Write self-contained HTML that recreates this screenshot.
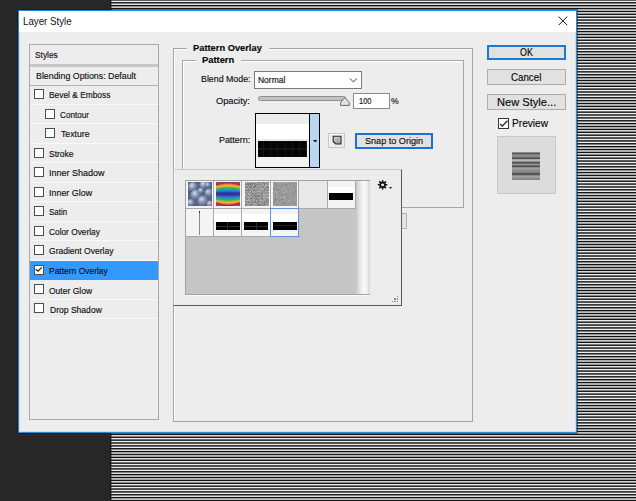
<!DOCTYPE html>
<html><head><meta charset="utf-8">
<style>
*{margin:0;padding:0;box-sizing:border-box}
html,body{width:636px;height:501px;overflow:hidden}
body{position:relative;background:#272727;font-family:"Liberation Sans",sans-serif;font-size:10px;color:#1b1b1b}
.stripes{position:absolute;left:111px;top:0;width:525px;height:501px;background:linear-gradient(180deg,#5e5e5e 0px 1px,#ececec 1px 2px,#282828 2px 3px,#797979 3px 4px,#e5e5e5 4px 5px,#141414 5px 6px,#909090 6px 7px,#cdcdcd 7px 8px,#141414 8px 9px,#acacac 9px 10px,#b2b2b2 10px 11px,#141414 11px 12px,#c7c7c7 12px 13px,#979797 13px 14px,#141414 14px 15px,#e2e2e2 15px 16px,#7c7c7c 16px 17px,#242424 17px 18px,#ececec 18px 19px,#616161 19px 20px,#3f3f3f 20px 21px,#ececec 21px 22px,#464646 22px 23px,#5a5a5a 23px 24px,#ececec 24px 25px,#2b2b2b 25px 26px,#757575 26px 27px,#ececec 27px 28px,#141414 28px 29px,#8d8d8d 29px 30px,#d1d1d1 30px 31px,#141414 31px 32px,#a8a8a8 32px 33px,#b6b6b6 33px 34px,#141414 34px 35px,#c3c3c3 35px 36px,#9b9b9b 36px 37px,#141414 37px 38px,#dedede 38px 39px,#808080 39px 40px,#212121 40px 41px,#ececec 41px 42px,#656565 42px 43px,#3c3c3c 43px 44px,#ececec 44px 45px,#4a4a4a 45px 46px,#575757 46px 47px,#ececec 47px 48px,#2f2f2f 48px 49px,#727272 49px 50px,#ececec 50px 51px,#171717 51px 52px,#8a8a8a 52px 53px,#d4d4d4 53px 54px,#141414 54px 55px,#a5a5a5 55px 56px,#b9b9b9 56px 57px,#141414 57px 58px,#c0c0c0 58px 59px,#9e9e9e 59px 60px,#141414 60px 61px,#dbdbdb 61px 62px,#838383 62px 63px,#1e1e1e 63px 64px,#ececec 64px 65px,#686868 65px 66px,#393939 66px 67px,#ececec 67px 68px,#4d4d4d 68px 69px,#545454 69px 70px,#ececec 70px 71px,#323232 71px 72px,#6f6f6f 72px 73px,#ececec 73px 74px,#1a1a1a 74px 75px,#868686 75px 76px,#d7d7d7 76px 77px,#141414 77px 78px,#a1a1a1 78px 79px,#bcbcbc 79px 80px,#141414 80px 81px,#bcbcbc 81px 82px,#a1a1a1 82px 83px,#141414 83px 84px,#d7d7d7 84px 85px,#868686 85px 86px,#1a1a1a 86px 87px,#ececec 87px 88px,#6b6b6b 88px 89px,#353535 89px 90px,#ececec 90px 91px,#505050 91px 92px,#505050 92px 93px,#ececec 93px 94px,#353535 94px 95px,#686868 95px 96px,#ececec 96px 97px,#1e1e1e 97px 98px,#838383 98px 99px,#dbdbdb 99px 100px,#141414 100px 101px,#9e9e9e 101px 102px,#c0c0c0 102px 103px,#141414 103px 104px,#b9b9b9 104px 105px,#a5a5a5 105px 106px,#141414 106px 107px,#d4d4d4 107px 108px,#8a8a8a 108px 109px,#171717 109px 110px,#ececec 110px 111px,#6f6f6f 111px 112px,#323232 112px 113px,#ececec 113px 114px,#545454 114px 115px,#4d4d4d 115px 116px,#ececec 116px 117px,#393939 117px 118px,#656565 118px 119px,#ececec 119px 120px,#212121 120px 121px,#808080 121px 122px,#dedede 122px 123px,#141414 123px 124px,#9b9b9b 124px 125px,#c3c3c3 125px 126px,#141414 126px 127px,#b6b6b6 127px 128px,#a8a8a8 128px 129px,#141414 129px 130px,#d1d1d1 130px 131px,#8d8d8d 131px 132px,#141414 132px 133px,#ececec 133px 134px,#727272 134px 135px,#2f2f2f 135px 136px,#ececec 136px 137px,#575757 137px 138px,#4a4a4a 138px 139px,#ececec 139px 140px,#3c3c3c 140px 141px,#616161 141px 142px,#ececec 142px 143px,#242424 143px 144px,#7c7c7c 144px 145px,#e2e2e2 145px 146px,#141414 146px 147px,#979797 147px 148px,#c7c7c7 148px 149px,#141414 149px 150px,#b2b2b2 150px 151px,#acacac 151px 152px,#141414 152px 153px,#cdcdcd 153px 154px,#909090 154px 155px,#141414 155px 156px,#e8e8e8 156px 157px,#757575 157px 158px,#2b2b2b 158px 159px,#ececec 159px 160px,#5a5a5a 160px 161px,#464646 161px 162px,#ececec 162px 163px,#434343 163px 164px,#5e5e5e 164px 165px,#ececec 165px 166px,#282828 166px 167px,#797979 167px 168px,#e5e5e5 168px 169px,#141414 169px 170px,#949494 170px 171px,#cacaca 171px 172px,#141414 172px 173px,#afafaf 173px 174px,#afafaf 174px 175px,#141414 175px 176px,#cacaca 176px 177px,#949494 177px 178px,#141414 178px 179px,#e5e5e5 179px 180px,#797979 180px 181px,#282828 181px 182px,#ececec 182px 183px,#5e5e5e 183px 184px,#434343 184px 185px,#ececec 185px 186px,#464646 186px 187px,#5a5a5a 187px 188px,#ececec 188px 189px,#2b2b2b 189px 190px,#757575 190px 191px,#e8e8e8 191px 192px,#141414 192px 193px,#909090 193px 194px,#cdcdcd 194px 195px,#141414 195px 196px,#acacac 196px 197px,#b2b2b2 197px 198px,#141414 198px 199px,#c7c7c7 199px 200px,#979797 200px 201px,#141414 201px 202px,#e2e2e2 202px 203px,#7c7c7c 203px 204px,#242424 204px 205px,#ececec 205px 206px,#616161 206px 207px,#3c3c3c 207px 208px,#ececec 208px 209px,#4a4a4a 209px 210px,#575757 210px 211px,#ececec 211px 212px,#2f2f2f 212px 213px,#727272 213px 214px,#ececec 214px 215px,#141414 215px 216px,#8d8d8d 216px 217px,#d1d1d1 217px 218px,#141414 218px 219px,#a8a8a8 219px 220px,#b6b6b6 220px 221px,#141414 221px 222px,#c3c3c3 222px 223px,#9b9b9b 223px 224px,#141414 224px 225px,#dedede 225px 226px,#808080 226px 227px,#212121 227px 228px,#ececec 228px 229px,#656565 229px 230px,#393939 230px 231px,#ececec 231px 232px,#4d4d4d 232px 233px,#545454 233px 234px,#ececec 234px 235px,#323232 235px 236px,#6f6f6f 236px 237px,#ececec 237px 238px,#171717 238px 239px,#8a8a8a 239px 240px,#d4d4d4 240px 241px,#141414 241px 242px,#a5a5a5 242px 243px,#b9b9b9 243px 244px,#141414 244px 245px,#c0c0c0 245px 246px,#9e9e9e 246px 247px,#141414 247px 248px,#dbdbdb 248px 249px,#838383 249px 250px,#1e1e1e 250px 251px,#ececec 251px 252px,#686868 252px 253px,#353535 253px 254px,#ececec 254px 255px,#505050 255px 256px,#505050 256px 257px,#ececec 257px 258px,#353535 258px 259px,#6b6b6b 259px 260px,#ececec 260px 261px,#1a1a1a 261px 262px,#868686 262px 263px,#d7d7d7 263px 264px,#141414 264px 265px,#a1a1a1 265px 266px,#bcbcbc 266px 267px,#141414 267px 268px,#bcbcbc 268px 269px,#a1a1a1 269px 270px,#141414 270px 271px,#d7d7d7 271px 272px,#868686 272px 273px,#1a1a1a 273px 274px,#ececec 274px 275px,#6f6f6f 275px 276px,#323232 276px 277px,#ececec 277px 278px,#545454 278px 279px,#4d4d4d 279px 280px,#ececec 280px 281px,#393939 281px 282px,#686868 282px 283px,#ececec 283px 284px,#1e1e1e 284px 285px,#838383 285px 286px,#dbdbdb 286px 287px,#141414 287px 288px,#9e9e9e 288px 289px,#c0c0c0 289px 290px,#141414 290px 291px,#b9b9b9 291px 292px,#a5a5a5 292px 293px,#141414 293px 294px,#d4d4d4 294px 295px,#8a8a8a 295px 296px,#171717 296px 297px,#ececec 297px 298px,#727272 298px 299px,#2f2f2f 299px 300px,#ececec 300px 301px,#575757 301px 302px,#4a4a4a 302px 303px,#ececec 303px 304px,#3c3c3c 304px 305px,#656565 305px 306px,#ececec 306px 307px,#212121 307px 308px,#808080 308px 309px,#dedede 309px 310px,#141414 310px 311px,#9b9b9b 311px 312px,#c3c3c3 312px 313px,#141414 313px 314px,#b6b6b6 314px 315px,#a8a8a8 315px 316px,#141414 316px 317px,#d1d1d1 317px 318px,#8d8d8d 318px 319px,#141414 319px 320px,#ececec 320px 321px,#757575 321px 322px,#2b2b2b 322px 323px,#ececec 323px 324px,#5a5a5a 324px 325px,#464646 325px 326px,#ececec 326px 327px,#3f3f3f 327px 328px,#616161 328px 329px,#ececec 329px 330px,#242424 330px 331px,#7c7c7c 331px 332px,#e2e2e2 332px 333px,#141414 333px 334px,#979797 334px 335px,#c7c7c7 335px 336px,#141414 336px 337px,#b2b2b2 337px 338px,#acacac 338px 339px,#141414 339px 340px,#cdcdcd 340px 341px,#909090 341px 342px,#141414 342px 343px,#e5e5e5 343px 344px,#797979 344px 345px,#282828 345px 346px,#ececec 346px 347px,#5e5e5e 347px 348px,#434343 348px 349px,#ececec 349px 350px,#434343 350px 351px,#5e5e5e 351px 352px,#ececec 352px 353px,#282828 353px 354px,#797979 354px 355px,#e5e5e5 355px 356px,#141414 356px 357px,#949494 357px 358px,#cacaca 358px 359px,#141414 359px 360px,#afafaf 360px 361px,#afafaf 361px 362px,#141414 362px 363px,#cacaca 363px 364px,#949494 364px 365px,#141414 365px 366px,#e2e2e2 366px 367px,#7c7c7c 367px 368px,#242424 368px 369px,#ececec 369px 370px,#616161 370px 371px,#3f3f3f 371px 372px,#ececec 372px 373px,#464646 373px 374px,#5a5a5a 374px 375px,#ececec 375px 376px,#2b2b2b 376px 377px,#757575 377px 378px,#e8e8e8 378px 379px,#141414 379px 380px,#909090 380px 381px,#cdcdcd 381px 382px,#141414 382px 383px,#acacac 383px 384px,#b2b2b2 384px 385px,#141414 385px 386px,#c7c7c7 386px 387px,#9b9b9b 387px 388px,#141414 388px 389px,#dedede 389px 390px,#808080 390px 391px,#212121 391px 392px,#ececec 392px 393px,#656565 393px 394px,#3c3c3c 394px 395px,#ececec 395px 396px,#4a4a4a 396px 397px,#575757 397px 398px,#ececec 398px 399px,#2f2f2f 399px 400px,#727272 400px 401px,#ececec 401px 402px,#141414 402px 403px,#8d8d8d 403px 404px,#d1d1d1 404px 405px,#141414 405px 406px,#a8a8a8 406px 407px,#b6b6b6 407px 408px,#141414 408px 409px,#c3c3c3 409px 410px,#9e9e9e 410px 411px,#141414 411px 412px,#dbdbdb 412px 413px,#838383 413px 414px,#1e1e1e 414px 415px,#ececec 415px 416px,#686868 416px 417px,#393939 417px 418px,#ececec 418px 419px,#4d4d4d 419px 420px,#545454 420px 421px,#ececec 421px 422px,#323232 422px 423px,#6f6f6f 423px 424px,#ececec 424px 425px,#171717 425px 426px,#8a8a8a 426px 427px,#d4d4d4 427px 428px,#141414 428px 429px,#a5a5a5 429px 430px,#b9b9b9 430px 431px,#141414 431px 432px,#c0c0c0 432px 433px,#a1a1a1 433px 434px,#141414 434px 435px,#d7d7d7 435px 436px,#868686 436px 437px,#1a1a1a 437px 438px,#ececec 438px 439px,#6b6b6b 439px 440px,#353535 440px 441px,#ececec 441px 442px,#505050 442px 443px,#505050 443px 444px,#ececec 444px 445px,#353535 445px 446px,#6b6b6b 446px 447px,#ececec 447px 448px,#1a1a1a 448px 449px,#868686 449px 450px,#d7d7d7 450px 451px,#141414 451px 452px,#a1a1a1 452px 453px,#bcbcbc 453px 454px,#141414 454px 455px,#b9b9b9 455px 456px,#a5a5a5 456px 457px,#141414 457px 458px,#d4d4d4 458px 459px,#8a8a8a 459px 460px,#171717 460px 461px,#ececec 461px 462px,#6f6f6f 462px 463px,#323232 463px 464px,#ececec 464px 465px,#545454 465px 466px,#4d4d4d 466px 467px,#ececec 467px 468px,#393939 468px 469px,#686868 469px 470px,#ececec 470px 471px,#1e1e1e 471px 472px,#838383 472px 473px,#dbdbdb 473px 474px,#141414 474px 475px,#9e9e9e 475px 476px,#c0c0c0 476px 477px,#141414 477px 478px,#b6b6b6 478px 479px,#a8a8a8 479px 480px,#141414 480px 481px,#d1d1d1 481px 482px,#8d8d8d 482px 483px,#141414 483px 484px,#ececec 484px 485px,#727272 485px 486px,#2f2f2f 486px 487px,#ececec 487px 488px,#575757 488px 489px,#4a4a4a 489px 490px,#ececec 490px 491px,#3c3c3c 491px 492px,#656565 492px 493px,#ececec 493px 494px,#212121 494px 495px,#808080 495px 496px,#dedede 496px 497px,#141414 497px 498px,#9b9b9b 498px 499px,#c3c3c3 499px 500px,#141414 500px 501px)}
.a{position:absolute}
.t{position:absolute;white-space:nowrap;transform-origin:0 0;-webkit-text-stroke:0.15px currentColor}
#dlg{position:absolute;left:18px;top:10px;width:559px;height:423px;border:1px solid #2b8ad6;background:#ededed;box-shadow:0 0 0 1px rgba(8,16,24,0.45),inset 1px 1px 0 rgba(160,210,250,0.5),inset -1px -1px 0 rgba(160,210,250,0.5)}
#title{position:absolute;left:19px;top:11px;width:557px;height:21px;background:#fff}
.lb{position:absolute;border:1px solid #a9a9a9;background:#ededed}
.row{position:absolute;left:30px;width:128px;height:19.49px;border-bottom:1px solid #f9f9f9}
.cb{position:absolute;width:10px;height:10px;border:1px solid #4d4d4d;background:#fff}
.gb{position:absolute;border:1px solid #a5a5a5;box-shadow:inset 1px 1px 0 #fff}
.btn{position:absolute;border:1px solid #adadad;background:#e1e1e1}
</style></head><body>
<div class="stripes"></div>
<div class="a" style="left:110px;top:0;width:1px;height:501px;background:#161616"></div>
<div class="a" style="left:111px;top:0;width:1px;height:501px;background:rgba(30,30,30,0.4)"></div>
<div id="dlg"></div>
<div id="title"></div>
<svg class="a" style="left:557.5px;top:16.3px" width="10" height="10" viewBox="0 0 10 10"><path d="M0.6 0.6L9.2 9.2M9.2 0.6L0.6 9.2" stroke="#1a1a1a" stroke-width="1"/></svg>

<!-- left list -->
<div class="lb" style="left:29px;top:44px;width:130px;height:376px"></div>
<div class="a" style="left:30px;top:45px;width:128px;height:19px;background:#ececec"></div>
<div class="a" style="left:30px;top:63.5px;width:128px;height:3px;background:#c6c6c6"></div>
<div class="a" style="left:30px;top:85px;width:128px;height:1px;background:#b4b4b4"></div>
<div class="row" style="top:85.50px;"><div class="cb" style="left:3.6px;top:3.6px"></div></div>
<div class="row" style="top:104.99px;"><div class="cb" style="left:15.3px;top:3.6px"></div></div>
<div class="row" style="top:124.48px;"><div class="cb" style="left:15.3px;top:3.6px"></div></div>
<div class="row" style="top:143.97px;"><div class="cb" style="left:3.6px;top:3.6px"></div></div>
<div class="row" style="top:163.46px;"><div class="cb" style="left:3.6px;top:3.6px"></div></div>
<div class="row" style="top:182.95px;"><div class="cb" style="left:3.6px;top:3.6px"></div></div>
<div class="row" style="top:202.44px;"><div class="cb" style="left:3.6px;top:3.6px"></div></div>
<div class="row" style="top:221.93px;"><div class="cb" style="left:3.6px;top:3.6px"></div></div>
<div class="row" style="top:241.42px;"><div class="cb" style="left:3.6px;top:3.6px"></div></div>
<div class="row" style="top:260.91px;background:#3399ff;border-bottom-color:#3399ff;"><div class="cb" style="left:3.6px;top:3.6px"><svg class="a" style="left:-1px;top:-1px" width="10" height="10" viewBox="0 0 10 10"><path d="M1.7 4.3L4 6.2L7.7 2.4" fill="none" stroke="#222" stroke-width="1.3"/></svg></div></div>
<div class="row" style="top:280.40px;"><div class="cb" style="left:3.6px;top:3.6px"></div></div>
<div class="row" style="top:299.89px;"><div class="cb" style="left:3.6px;top:3.6px"></div></div>

<!-- right group boxes -->
<div class="gb" style="left:173px;top:48px;width:300px;height:374px"></div>
<div class="a" style="left:187px;top:44px;width:82px;height:8px;background:#ededed"></div>
<div class="gb" style="left:182px;top:60px;width:282px;height:148px"></div>
<div class="a" style="left:195.6px;top:57px;width:45px;height:8px;background:#ededed"></div>

<div class="a" style="left:254px;top:70.5px;width:107.5px;height:18.5px;background:#fff;border:1px solid #7a7a7a"></div>
<svg class="a" style="left:349.3px;top:77px" width="10" height="7" viewBox="0 0 10 7"><path d="M1 1.5L4.4 4.9L7.8 1.5" fill="none" stroke="#3a3a3a" stroke-width="1"/></svg>

<div class="a" style="left:257.7px;top:96.3px;width:88px;height:4.6px;background:#c2c2c2;border:1px solid #8e8e8e;border-radius:2.3px"></div>
<svg class="a" style="left:336px;top:92px" width="18" height="16" viewBox="0 0 18 16"><path d="M4.5 13.4V10.8L8 6.3Q8.9 5.2 9.8 6.3L13.4 10.8V13.4Z" fill="#e2e2e2" stroke="#6c6c6c" stroke-width="1"/></svg>
<div class="a" style="left:352.5px;top:93px;width:37.5px;height:15.5px;background:#fff;border:1px solid #8a8a8a"></div>

<div class="a" style="left:255px;top:113px;width:65px;height:55px;background:#000"></div>
<div class="a" style="left:256px;top:114px;width:53px;height:53px;background:#ececec"></div>
<div class="a" style="left:256px;top:124.4px;width:53px;height:15px;background:#fff"></div>
<div class="a" style="left:256px;top:157px;width:53px;height:10px;background:#f2f2f2"></div>
<div class="a" style="left:258px;top:140.6px;width:49.2px;height:16.2px;background:#050505"></div>
<div class="a" style="left:258px;top:140.6px;width:49.2px;height:16.2px;background:linear-gradient(180deg,transparent 7.4px,#151515 7.4px,#151515 8.6px,transparent 8.6px),repeating-linear-gradient(90deg,transparent 0,transparent 4.8px,#161616 4.8px,#161616 6px,transparent 6px,transparent 7.25px)"></div>
<div class="a" style="left:310px;top:114px;width:9px;height:53px;background:#b9d7f5"></div>
<svg class="a" style="left:312.5px;top:140.2px" width="5" height="3" viewBox="0 0 5 3"><path d="M0 0H4.4L2.2 2.4Z" fill="#111"/></svg>

<div class="a" style="left:328px;top:133px;width:17px;height:15px;background:#ececec;border:1px solid #c6c6c6;box-shadow:inset 1px 1px 0 #fafafa"></div>
<svg class="a" style="left:331.5px;top:134.5px" width="10" height="10" viewBox="0 0 10 10"><defs><linearGradient id="ig" x1="0" y1="0" x2="1" y2="1"><stop offset="0" stop-color="#d8d8d8"/><stop offset="1" stop-color="#8a8a8a"/></linearGradient></defs><path d="M1.2 1.2H9V9H3.8L1.2 6.4Z" fill="url(#ig)" stroke="#2a2a2a" stroke-width="1.1"/><path d="M2.5 2.5H7.6V7.6" fill="none" stroke="#c4c4c4" stroke-width="0.9"/></svg>
<div class="a" style="left:355px;top:132.5px;width:77.7px;height:16px;background:#e1e1e1;border:2px solid #1d72d4"></div>

<!-- right buttons -->
<div class="btn" style="left:487px;top:44.5px;width:79px;height:15.5px;border:2px solid #1c78d2"></div>
<div class="btn" style="left:487px;top:69px;width:79px;height:15.5px"></div>
<div class="btn" style="left:487px;top:94px;width:79px;height:15.5px"></div>
<div class="cb" style="left:498px;top:118px;width:11px;height:11px;border-color:#333"></div><svg class="a" style="left:498px;top:117.5px" width="12" height="12" viewBox="0 0 12 12"><path d="M2.2 6L4.3 8L9.5 2.7" fill="none" stroke="#2a2a2a" stroke-width="1.35"/></svg>
<div class="a" style="left:497px;top:136px;width:58.5px;height:57.5px;background:#dcdcdc;border:1px solid #c8c8c8"></div>
<div class="a" style="left:512px;top:152px;width:27.5px;height:28px;background:linear-gradient(180deg,#8a8a8a 0px 1px,#5a5a5a 1px 2px,#7a7a7a 2px 3px,#8e8e8e 3px 4px,#888888 4px 5px,#6a6a6a 5px 6px,#4f4f4f 6px 7px,#aaaaaa 7px 8px,#b8b8b8 8px 9px,#8a8a8a 9px 10px,#5a5a5a 10px 11px,#666666 11px 12px,#999999 12px 13px,#6a6a6a 13px 14px,#505050 14px 15px,#8a8a8a 15px 16px,#a0a0a0 16px 17px,#999999 17px 18px,#888888 18px 19px,#909090 19px 20px,#777777 20px 21px,#5a5a5a 21px 22px,#555555 22px 23px,#8a8a8a 23px 24px,#a0a0a0 24px 25px,#999999 25px 26px,#8a8a8a 26px 27px,#888888 27px 28px)"></div>

<!-- popup -->
<div class="a" style="left:173px;top:169px;width:229px;height:137px;background:#ececec;border-left:1px solid #b0b0b0;border-top:1px solid #c9c9c9;border-right:1px solid #5a5a5a;border-bottom:1px solid #5a5a5a;box-shadow:inset 1px 0 0 #fafafa"></div>
<div class="a" style="left:184.7px;top:179.5px;width:185.5px;height:115px;background:#c5c5c5;border:1px solid #a3a3a3;box-shadow:0 1px 0 #fafafa"></div>
<div class="a" style="left:355.5px;top:180.5px;width:14px;height:113px;background:linear-gradient(90deg,#c8c8c8,#e8e8e8 30%,#f8f8f8 55%,#f4f4f4 75%,#d2d2d2)"></div>
<div class="a" style="left:185.70px;top:180.50px;width:27.37px;height:27.37px;background:#f4f4f4"></div>
<div class="a" style="left:214.07px;top:180.50px;width:27.37px;height:27.37px;background:#f4f4f4"></div>
<div class="a" style="left:242.44px;top:180.50px;width:27.37px;height:27.37px;background:#f4f4f4"></div>
<div class="a" style="left:270.81px;top:180.50px;width:27.37px;height:27.37px;background:#f4f4f4"></div>
<div class="a" style="left:299.18px;top:180.50px;width:27.37px;height:27.37px;background:#e8e8e8"></div>
<div class="a" style="left:327.55px;top:180.50px;width:27.37px;height:27.37px;background:#f4f4f4"></div>
<div class="a" style="left:185.70px;top:208.87px;width:27.37px;height:27.37px;background:#f4f4f4"></div>
<div class="a" style="left:214.07px;top:208.87px;width:27.37px;height:27.37px;background:#f4f4f4"></div>
<div class="a" style="left:242.44px;top:208.87px;width:27.37px;height:27.37px;background:#f4f4f4"></div>
<div class="a" style="left:270.81px;top:208.87px;width:27.37px;height:27.37px;background:#f4f4f4"></div>
<div class="a" style="left:213.07px;top:180.5px;width:1px;height:56.74px;background:#a8a8a8"></div>
<div class="a" style="left:241.44px;top:180.5px;width:1px;height:56.74px;background:#a8a8a8"></div>
<div class="a" style="left:269.81px;top:180.5px;width:1px;height:56.74px;background:#a8a8a8"></div>
<div class="a" style="left:298.18px;top:180.5px;width:1px;height:56.74px;background:#a8a8a8"></div>
<div class="a" style="left:326.55px;top:180.5px;width:1px;height:28.37px;background:#a8a8a8"></div>
<div class="a" style="left:354.92px;top:180.5px;width:1px;height:28.37px;background:#a8a8a8"></div>
<div class="a" style="left:185.7px;top:207.87px;width:170.22px;height:1px;background:#a8a8a8"></div>
<div class="a" style="left:185.7px;top:236.24px;width:113.98px;height:1px;background:#a8a8a8"></div>
<svg class="a" style="left:187.7px;top:182px" width="24" height="24" viewBox="0 0 24 24"><defs><radialGradient id="bg1" cx="0.38" cy="0.34" r="0.7"><stop offset="0" stop-color="#eef2f8"/><stop offset="0.12" stop-color="#b8c4d8"/><stop offset="0.45" stop-color="#8594b2"/><stop offset="1" stop-color="#4a5876"/></radialGradient></defs><rect width="24" height="24" fill="#56647f"/><circle cx="5" cy="5" r="5" fill="url(#bg1)"/><circle cx="16" cy="3" r="4.5" fill="url(#bg1)"/><circle cx="21" cy="11" r="4.5" fill="url(#bg1)"/><circle cx="8" cy="13" r="5.5" fill="url(#bg1)"/><circle cx="15" cy="19" r="5.5" fill="url(#bg1)"/><circle cx="3" cy="21" r="4" fill="url(#bg1)"/><circle cx="22" cy="22" r="3.5" fill="url(#bg1)"/><circle cx="13" cy="9" r="3.2" fill="url(#bg1)"/><circle cx="20" cy="3" r="3" fill="url(#bg1)"/></svg>
<svg class="a" style="left:216px;top:182px" width="24" height="24" viewBox="0 0 24 24" shape-rendering="crispEdges"><path d="M0 0h1v1h-1zM23 0h1v1h-1zM0 23h1v1h-1zM23 23h1v1h-1z" fill="#a36"/><path d="M1 0h1v1h-1zM4 0h1v1h-1zM19 0h1v1h-1zM22 0h1v1h-1zM1 23h1v1h-1zM4 23h1v1h-1zM19 23h1v1h-1zM22 23h1v1h-1z" fill="#a45"/><path d="M2 0h1v1h-1zM3 0h1v1h-1zM20 0h1v1h-1zM21 0h1v1h-1zM7 1h1v1h-1zM16 1h1v1h-1zM7 22h1v1h-1zM16 22h1v1h-1zM2 23h1v1h-1zM3 23h1v1h-1zM20 23h1v1h-1zM21 23h1v1h-1z" fill="#b44"/><path d="M5 0h1v1h-1zM18 0h1v1h-1zM5 1h1v1h-1zM18 1h1v1h-1zM1 2h1v1h-1zM22 2h1v1h-1zM1 21h1v1h-1zM22 21h1v1h-1zM5 22h1v1h-1zM18 22h1v1h-1zM5 23h1v1h-1zM18 23h1v1h-1z" fill="#936"/><path d="M6 0h1v1h-1zM17 0h1v1h-1zM2 1h1v1h-1zM21 1h1v1h-1zM2 22h1v1h-1zM21 22h1v1h-1zM6 23h1v1h-1zM17 23h1v1h-1z" fill="#836"/><path d="M7 0h1v1h-1zM8 0h1v1h-1zM9 0h1v1h-1zM10 0h1v1h-1zM11 0h1v1h-1zM12 0h1v1h-1zM13 0h1v1h-1zM14 0h1v1h-1zM15 0h1v1h-1zM16 0h1v1h-1zM3 1h1v1h-1zM4 1h1v1h-1zM19 1h1v1h-1zM20 1h1v1h-1zM0 2h1v1h-1zM23 2h1v1h-1zM0 21h1v1h-1zM23 21h1v1h-1zM3 22h1v1h-1zM4 22h1v1h-1zM19 22h1v1h-1zM20 22h1v1h-1zM7 23h1v1h-1zM8 23h1v1h-1zM9 23h1v1h-1zM10 23h1v1h-1zM11 23h1v1h-1zM12 23h1v1h-1zM13 23h1v1h-1zM14 23h1v1h-1zM15 23h1v1h-1zM16 23h1v1h-1z" fill="#837"/><path d="M0 1h1v1h-1zM23 1h1v1h-1zM0 22h1v1h-1zM23 22h1v1h-1z" fill="#b45"/><path d="M1 1h1v1h-1zM6 1h1v1h-1zM17 1h1v1h-1zM22 1h1v1h-1zM2 2h1v1h-1zM21 2h1v1h-1zM2 21h1v1h-1zM21 21h1v1h-1zM1 22h1v1h-1zM6 22h1v1h-1zM17 22h1v1h-1zM22 22h1v1h-1z" fill="#a35"/><path d="M8 1h1v1h-1zM9 1h1v1h-1zM14 1h1v1h-1zM15 1h1v1h-1zM3 2h1v1h-1zM20 2h1v1h-1zM3 21h1v1h-1zM20 21h1v1h-1zM8 22h1v1h-1zM9 22h1v1h-1zM14 22h1v1h-1zM15 22h1v1h-1z" fill="#c44"/><path d="M10 1h1v1h-1zM13 1h1v1h-1zM10 22h1v1h-1zM13 22h1v1h-1z" fill="#c43"/><path d="M11 1h1v1h-1zM12 1h1v1h-1zM4 2h1v1h-1zM19 2h1v1h-1zM0 3h1v1h-1zM23 3h1v1h-1zM0 20h1v1h-1zM23 20h1v1h-1zM4 21h1v1h-1zM19 21h1v1h-1zM11 22h1v1h-1zM12 22h1v1h-1z" fill="#d53"/><path d="M5 2h1v1h-1zM18 2h1v1h-1zM1 3h1v1h-1zM22 3h1v1h-1zM1 20h1v1h-1zM22 20h1v1h-1zM5 21h1v1h-1zM18 21h1v1h-1z" fill="#d63"/><path d="M6 2h1v1h-1zM17 2h1v1h-1zM6 21h1v1h-1zM17 21h1v1h-1z" fill="#e63"/><path d="M7 2h1v1h-1zM8 2h1v1h-1zM15 2h1v1h-1zM16 2h1v1h-1zM2 3h1v1h-1zM21 3h1v1h-1zM2 20h1v1h-1zM21 20h1v1h-1zM7 21h1v1h-1zM8 21h1v1h-1zM15 21h1v1h-1zM16 21h1v1h-1z" fill="#e73"/><path d="M9 2h1v1h-1zM10 2h1v1h-1zM11 2h1v1h-1zM12 2h1v1h-1zM13 2h1v1h-1zM14 2h1v1h-1zM3 3h1v1h-1zM20 3h1v1h-1zM3 20h1v1h-1zM20 20h1v1h-1zM9 21h1v1h-1zM10 21h1v1h-1zM11 21h1v1h-1zM12 21h1v1h-1zM13 21h1v1h-1zM14 21h1v1h-1z" fill="#e82"/><path d="M4 3h1v1h-1zM19 3h1v1h-1zM4 20h1v1h-1zM19 20h1v1h-1z" fill="#e92"/><path d="M5 3h1v1h-1zM18 3h1v1h-1zM0 4h1v1h-1zM23 4h1v1h-1zM0 19h1v1h-1zM23 19h1v1h-1zM5 20h1v1h-1zM18 20h1v1h-1z" fill="#e93"/><path d="M6 3h1v1h-1zM7 3h1v1h-1zM8 3h1v1h-1zM15 3h1v1h-1zM16 3h1v1h-1zM17 3h1v1h-1zM1 4h1v1h-1zM2 4h1v1h-1zM21 4h1v1h-1zM22 4h1v1h-1zM1 19h1v1h-1zM2 19h1v1h-1zM21 19h1v1h-1zM22 19h1v1h-1zM6 20h1v1h-1zM7 20h1v1h-1zM8 20h1v1h-1zM15 20h1v1h-1zM16 20h1v1h-1zM17 20h1v1h-1z" fill="#ea3"/><path d="M9 3h1v1h-1zM10 3h1v1h-1zM11 3h1v1h-1zM12 3h1v1h-1zM13 3h1v1h-1zM14 3h1v1h-1zM9 20h1v1h-1zM10 20h1v1h-1zM11 20h1v1h-1zM12 20h1v1h-1zM13 20h1v1h-1zM14 20h1v1h-1z" fill="#eb3"/><path d="M3 4h1v1h-1zM4 4h1v1h-1zM5 4h1v1h-1zM18 4h1v1h-1zM19 4h1v1h-1zM20 4h1v1h-1zM3 19h1v1h-1zM4 19h1v1h-1zM5 19h1v1h-1zM18 19h1v1h-1zM19 19h1v1h-1zM20 19h1v1h-1z" fill="#db3"/><path d="M6 4h1v1h-1zM17 4h1v1h-1zM0 5h1v1h-1zM23 5h1v1h-1zM0 18h1v1h-1zM23 18h1v1h-1zM6 19h1v1h-1zM17 19h1v1h-1z" fill="#cb3"/><path d="M7 4h1v1h-1zM8 4h1v1h-1zM15 4h1v1h-1zM16 4h1v1h-1zM1 5h1v1h-1zM22 5h1v1h-1zM1 18h1v1h-1zM22 18h1v1h-1zM7 19h1v1h-1zM8 19h1v1h-1zM15 19h1v1h-1zM16 19h1v1h-1z" fill="#bb3"/><path d="M9 4h1v1h-1zM10 4h1v1h-1zM11 4h1v1h-1zM12 4h1v1h-1zM13 4h1v1h-1zM14 4h1v1h-1zM2 5h1v1h-1zM21 5h1v1h-1zM2 18h1v1h-1zM21 18h1v1h-1zM9 19h1v1h-1zM10 19h1v1h-1zM11 19h1v1h-1zM12 19h1v1h-1zM13 19h1v1h-1zM14 19h1v1h-1z" fill="#ab3"/><path d="M3 5h1v1h-1zM20 5h1v1h-1zM3 18h1v1h-1zM20 18h1v1h-1z" fill="#9b4"/><path d="M4 5h1v1h-1zM19 5h1v1h-1zM4 18h1v1h-1zM19 18h1v1h-1z" fill="#8b4"/><path d="M5 5h1v1h-1zM6 5h1v1h-1zM17 5h1v1h-1zM18 5h1v1h-1zM5 18h1v1h-1zM6 18h1v1h-1zM17 18h1v1h-1zM18 18h1v1h-1z" fill="#7b4"/><path d="M7 5h1v1h-1zM8 5h1v1h-1zM15 5h1v1h-1zM16 5h1v1h-1zM0 6h1v1h-1zM23 6h1v1h-1zM0 17h1v1h-1zM23 17h1v1h-1zM7 18h1v1h-1zM8 18h1v1h-1zM15 18h1v1h-1zM16 18h1v1h-1z" fill="#6b4"/><path d="M9 5h1v1h-1zM10 5h1v1h-1zM11 5h1v1h-1zM12 5h1v1h-1zM13 5h1v1h-1zM14 5h1v1h-1zM1 6h1v1h-1zM22 6h1v1h-1zM1 17h1v1h-1zM22 17h1v1h-1zM9 18h1v1h-1zM10 18h1v1h-1zM11 18h1v1h-1zM12 18h1v1h-1zM13 18h1v1h-1zM14 18h1v1h-1z" fill="#5b4"/><path d="M2 6h1v1h-1zM3 6h1v1h-1zM4 6h1v1h-1zM19 6h1v1h-1zM20 6h1v1h-1zM21 6h1v1h-1zM2 17h1v1h-1zM3 17h1v1h-1zM4 17h1v1h-1zM19 17h1v1h-1zM20 17h1v1h-1zM21 17h1v1h-1z" fill="#4a5"/><path d="M5 6h1v1h-1zM6 6h1v1h-1zM17 6h1v1h-1zM18 6h1v1h-1zM5 17h1v1h-1zM6 17h1v1h-1zM17 17h1v1h-1zM18 17h1v1h-1z" fill="#3a6"/><path d="M7 6h1v1h-1zM8 6h1v1h-1zM9 6h1v1h-1zM10 6h1v1h-1zM11 6h1v1h-1zM12 6h1v1h-1zM13 6h1v1h-1zM14 6h1v1h-1zM15 6h1v1h-1zM16 6h1v1h-1zM0 7h1v1h-1zM23 7h1v1h-1zM0 16h1v1h-1zM23 16h1v1h-1zM7 17h1v1h-1zM8 17h1v1h-1zM9 17h1v1h-1zM10 17h1v1h-1zM11 17h1v1h-1zM12 17h1v1h-1zM13 17h1v1h-1zM14 17h1v1h-1zM15 17h1v1h-1zM16 17h1v1h-1z" fill="#3a7"/><path d="M1 7h1v1h-1zM22 7h1v1h-1zM1 16h1v1h-1zM22 16h1v1h-1z" fill="#3a8"/><path d="M2 7h1v1h-1zM3 7h1v1h-1zM20 7h1v1h-1zM21 7h1v1h-1zM2 16h1v1h-1zM3 16h1v1h-1zM20 16h1v1h-1zM21 16h1v1h-1z" fill="#3a9"/><path d="M4 7h1v1h-1zM19 7h1v1h-1zM4 16h1v1h-1zM19 16h1v1h-1z" fill="#39a"/><path d="M5 7h1v1h-1zM6 7h1v1h-1zM7 7h1v1h-1zM16 7h1v1h-1zM17 7h1v1h-1zM18 7h1v1h-1zM5 16h1v1h-1zM6 16h1v1h-1zM7 16h1v1h-1zM16 16h1v1h-1zM17 16h1v1h-1zM18 16h1v1h-1z" fill="#29a"/><path d="M8 7h1v1h-1zM9 7h1v1h-1zM10 7h1v1h-1zM11 7h1v1h-1zM12 7h1v1h-1zM13 7h1v1h-1zM14 7h1v1h-1zM15 7h1v1h-1zM0 8h1v1h-1zM1 8h1v1h-1zM22 8h1v1h-1zM23 8h1v1h-1zM0 15h1v1h-1zM1 15h1v1h-1zM22 15h1v1h-1zM23 15h1v1h-1zM8 16h1v1h-1zM9 16h1v1h-1zM10 16h1v1h-1zM11 16h1v1h-1zM12 16h1v1h-1zM13 16h1v1h-1zM14 16h1v1h-1zM15 16h1v1h-1z" fill="#29b"/><path d="M2 8h1v1h-1zM3 8h1v1h-1zM4 8h1v1h-1zM19 8h1v1h-1zM20 8h1v1h-1zM21 8h1v1h-1zM2 15h1v1h-1zM3 15h1v1h-1zM4 15h1v1h-1zM19 15h1v1h-1zM20 15h1v1h-1zM21 15h1v1h-1z" fill="#28b"/><path d="M5 8h1v1h-1zM6 8h1v1h-1zM7 8h1v1h-1zM8 8h1v1h-1zM9 8h1v1h-1zM10 8h1v1h-1zM11 8h1v1h-1zM12 8h1v1h-1zM13 8h1v1h-1zM14 8h1v1h-1zM15 8h1v1h-1zM16 8h1v1h-1zM17 8h1v1h-1zM18 8h1v1h-1zM5 15h1v1h-1zM6 15h1v1h-1zM7 15h1v1h-1zM8 15h1v1h-1zM9 15h1v1h-1zM10 15h1v1h-1zM11 15h1v1h-1zM12 15h1v1h-1zM13 15h1v1h-1zM14 15h1v1h-1zM15 15h1v1h-1zM16 15h1v1h-1zM17 15h1v1h-1zM18 15h1v1h-1z" fill="#28c"/><path d="M0 9h1v1h-1zM23 9h1v1h-1zM0 14h1v1h-1zM23 14h1v1h-1z" fill="#27c"/><path d="M1 9h1v1h-1zM2 9h1v1h-1zM3 9h1v1h-1zM20 9h1v1h-1zM21 9h1v1h-1zM22 9h1v1h-1zM1 14h1v1h-1zM2 14h1v1h-1zM3 14h1v1h-1zM20 14h1v1h-1zM21 14h1v1h-1zM22 14h1v1h-1z" fill="#37c"/><path d="M4 9h1v1h-1zM5 9h1v1h-1zM6 9h1v1h-1zM7 9h1v1h-1zM8 9h1v1h-1zM9 9h1v1h-1zM10 9h1v1h-1zM11 9h1v1h-1zM12 9h1v1h-1zM13 9h1v1h-1zM14 9h1v1h-1zM15 9h1v1h-1zM16 9h1v1h-1zM17 9h1v1h-1zM18 9h1v1h-1zM19 9h1v1h-1zM4 14h1v1h-1zM5 14h1v1h-1zM6 14h1v1h-1zM7 14h1v1h-1zM8 14h1v1h-1zM9 14h1v1h-1zM10 14h1v1h-1zM11 14h1v1h-1zM12 14h1v1h-1zM13 14h1v1h-1zM14 14h1v1h-1zM15 14h1v1h-1zM16 14h1v1h-1zM17 14h1v1h-1zM18 14h1v1h-1zM19 14h1v1h-1z" fill="#36c"/><path d="M0 10h1v1h-1zM23 10h1v1h-1zM0 13h1v1h-1zM23 13h1v1h-1z" fill="#34b"/><path d="M1 10h1v1h-1zM2 10h1v1h-1zM3 10h1v1h-1zM4 10h1v1h-1zM5 10h1v1h-1zM6 10h1v1h-1zM7 10h1v1h-1zM8 10h1v1h-1zM9 10h1v1h-1zM10 10h1v1h-1zM11 10h1v1h-1zM12 10h1v1h-1zM13 10h1v1h-1zM14 10h1v1h-1zM15 10h1v1h-1zM16 10h1v1h-1zM17 10h1v1h-1zM18 10h1v1h-1zM19 10h1v1h-1zM20 10h1v1h-1zM21 10h1v1h-1zM22 10h1v1h-1zM1 13h1v1h-1zM2 13h1v1h-1zM3 13h1v1h-1zM4 13h1v1h-1zM5 13h1v1h-1zM6 13h1v1h-1zM7 13h1v1h-1zM8 13h1v1h-1zM9 13h1v1h-1zM10 13h1v1h-1zM11 13h1v1h-1zM12 13h1v1h-1zM13 13h1v1h-1zM14 13h1v1h-1zM15 13h1v1h-1zM16 13h1v1h-1zM17 13h1v1h-1zM18 13h1v1h-1zM19 13h1v1h-1zM20 13h1v1h-1zM21 13h1v1h-1zM22 13h1v1h-1z" fill="#34a"/><path d="M0 11h1v1h-1zM1 11h1v1h-1zM2 11h1v1h-1zM3 11h1v1h-1zM4 11h1v1h-1zM19 11h1v1h-1zM20 11h1v1h-1zM21 11h1v1h-1zM22 11h1v1h-1zM23 11h1v1h-1zM0 12h1v1h-1zM1 12h1v1h-1zM2 12h1v1h-1zM3 12h1v1h-1zM4 12h1v1h-1zM19 12h1v1h-1zM20 12h1v1h-1zM21 12h1v1h-1zM22 12h1v1h-1zM23 12h1v1h-1z" fill="#339"/><path d="M5 11h1v1h-1zM6 11h1v1h-1zM7 11h1v1h-1zM8 11h1v1h-1zM9 11h1v1h-1zM10 11h1v1h-1zM11 11h1v1h-1zM12 11h1v1h-1zM13 11h1v1h-1zM14 11h1v1h-1zM15 11h1v1h-1zM16 11h1v1h-1zM17 11h1v1h-1zM18 11h1v1h-1zM5 12h1v1h-1zM6 12h1v1h-1zM7 12h1v1h-1zM8 12h1v1h-1zM9 12h1v1h-1zM10 12h1v1h-1zM11 12h1v1h-1zM12 12h1v1h-1zM13 12h1v1h-1zM14 12h1v1h-1zM15 12h1v1h-1zM16 12h1v1h-1zM17 12h1v1h-1zM18 12h1v1h-1z" fill="#338"/></svg>
<svg class="a" style="left:244.6px;top:182.3px" width="24" height="24" viewBox="0 0 24 24" shape-rendering="crispEdges"><path d="M7 1h1v1h-1zM10 1h1v1h-1zM3 2h1v1h-1zM5 2h1v1h-1zM19 2h1v1h-1zM10 3h1v1h-1zM9 5h1v1h-1zM20 7h1v1h-1zM13 13h1v1h-1zM11 16h1v1h-1zM17 16h1v1h-1zM14 22h1v1h-1zM0 23h1v1h-1zM13 23h1v1h-1z" fill="#666"/><path d="M5 1h1v1h-1zM8 1h1v1h-1zM0 2h1v1h-1zM1 2h1v1h-1zM9 2h1v1h-1zM15 2h1v1h-1zM2 4h1v1h-1zM6 4h1v1h-1zM10 4h1v1h-1zM18 4h1v1h-1zM5 5h1v1h-1zM8 5h1v1h-1zM22 5h1v1h-1zM3 7h1v1h-1zM19 7h1v1h-1zM1 8h1v1h-1zM0 9h1v1h-1zM7 11h1v1h-1zM10 11h1v1h-1zM12 11h1v1h-1zM16 11h1v1h-1zM20 11h1v1h-1zM3 13h1v1h-1zM9 13h1v1h-1zM16 13h1v1h-1zM11 14h1v1h-1zM14 14h1v1h-1zM22 14h1v1h-1zM7 15h1v1h-1zM0 16h1v1h-1zM2 16h1v1h-1zM5 16h1v1h-1zM6 16h1v1h-1zM16 16h1v1h-1zM1 17h1v1h-1zM12 17h1v1h-1zM3 19h1v1h-1zM21 19h1v1h-1zM10 20h1v1h-1zM12 20h1v1h-1zM19 20h1v1h-1zM22 20h1v1h-1zM13 21h1v1h-1zM19 21h1v1h-1zM0 22h1v1h-1zM6 22h1v1h-1zM19 22h1v1h-1zM17 23h1v1h-1z" fill="#777"/><path d="M2 0h1v1h-1zM13 0h1v1h-1zM16 0h1v1h-1zM17 0h1v1h-1zM18 0h1v1h-1zM23 0h1v1h-1zM3 1h1v1h-1zM4 1h1v1h-1zM6 1h1v1h-1zM13 1h1v1h-1zM17 1h1v1h-1zM18 1h1v1h-1zM19 1h1v1h-1zM20 1h1v1h-1zM22 1h1v1h-1zM2 2h1v1h-1zM6 2h1v1h-1zM7 2h1v1h-1zM11 2h1v1h-1zM12 2h1v1h-1zM13 2h1v1h-1zM22 2h1v1h-1zM9 3h1v1h-1zM22 3h1v1h-1zM1 4h1v1h-1zM4 4h1v1h-1zM5 4h1v1h-1zM7 4h1v1h-1zM9 4h1v1h-1zM15 4h1v1h-1zM16 4h1v1h-1zM22 4h1v1h-1zM23 4h1v1h-1zM0 5h1v1h-1zM1 5h1v1h-1zM2 5h1v1h-1zM3 5h1v1h-1zM4 5h1v1h-1zM12 5h1v1h-1zM13 5h1v1h-1zM14 5h1v1h-1zM16 5h1v1h-1zM18 5h1v1h-1zM21 5h1v1h-1zM23 5h1v1h-1zM11 6h1v1h-1zM23 6h1v1h-1zM5 7h1v1h-1zM9 7h1v1h-1zM10 7h1v1h-1zM12 7h1v1h-1zM15 7h1v1h-1zM23 7h1v1h-1zM2 8h1v1h-1zM3 8h1v1h-1zM4 8h1v1h-1zM8 8h1v1h-1zM9 8h1v1h-1zM11 8h1v1h-1zM13 8h1v1h-1zM15 8h1v1h-1zM17 8h1v1h-1zM22 8h1v1h-1zM23 8h1v1h-1zM6 9h1v1h-1zM10 9h1v1h-1zM18 9h1v1h-1zM19 9h1v1h-1zM0 10h1v1h-1zM9 10h1v1h-1zM12 10h1v1h-1zM14 10h1v1h-1zM16 10h1v1h-1zM17 10h1v1h-1zM22 10h1v1h-1zM23 10h1v1h-1zM2 11h1v1h-1zM5 11h1v1h-1zM8 11h1v1h-1zM14 11h1v1h-1zM17 11h1v1h-1zM23 11h1v1h-1zM1 12h1v1h-1zM6 12h1v1h-1zM7 12h1v1h-1zM9 12h1v1h-1zM11 12h1v1h-1zM2 13h1v1h-1zM5 13h1v1h-1zM7 13h1v1h-1zM10 13h1v1h-1zM11 13h1v1h-1zM17 13h1v1h-1zM23 13h1v1h-1zM0 14h1v1h-1zM2 14h1v1h-1zM7 14h1v1h-1zM9 14h1v1h-1zM10 14h1v1h-1zM12 14h1v1h-1zM13 14h1v1h-1zM17 14h1v1h-1zM21 14h1v1h-1zM10 15h1v1h-1zM16 15h1v1h-1zM9 16h1v1h-1zM10 16h1v1h-1zM12 16h1v1h-1zM19 16h1v1h-1zM4 17h1v1h-1zM7 17h1v1h-1zM10 17h1v1h-1zM13 17h1v1h-1zM16 17h1v1h-1zM21 17h1v1h-1zM22 17h1v1h-1zM23 17h1v1h-1zM9 18h1v1h-1zM12 18h1v1h-1zM13 18h1v1h-1zM20 18h1v1h-1zM23 18h1v1h-1zM0 19h1v1h-1zM1 19h1v1h-1zM2 19h1v1h-1zM6 19h1v1h-1zM7 19h1v1h-1zM9 19h1v1h-1zM10 19h1v1h-1zM12 19h1v1h-1zM13 19h1v1h-1zM14 19h1v1h-1zM15 19h1v1h-1zM16 19h1v1h-1zM23 19h1v1h-1zM0 20h1v1h-1zM3 20h1v1h-1zM4 20h1v1h-1zM7 20h1v1h-1zM8 20h1v1h-1zM11 20h1v1h-1zM1 21h1v1h-1zM6 21h1v1h-1zM16 21h1v1h-1zM18 21h1v1h-1zM1 22h1v1h-1zM4 22h1v1h-1zM5 22h1v1h-1zM7 22h1v1h-1zM12 22h1v1h-1zM13 22h1v1h-1zM15 22h1v1h-1zM17 22h1v1h-1zM1 23h1v1h-1zM2 23h1v1h-1zM4 23h1v1h-1zM5 23h1v1h-1zM7 23h1v1h-1zM9 23h1v1h-1zM11 23h1v1h-1zM15 23h1v1h-1z" fill="#888"/><path d="M4 0h1v1h-1zM5 0h1v1h-1zM8 0h1v1h-1zM11 0h1v1h-1zM14 0h1v1h-1zM15 0h1v1h-1zM19 0h1v1h-1zM20 0h1v1h-1zM21 0h1v1h-1zM22 0h1v1h-1zM0 1h1v1h-1zM1 1h1v1h-1zM2 1h1v1h-1zM11 1h1v1h-1zM12 1h1v1h-1zM14 1h1v1h-1zM15 1h1v1h-1zM21 1h1v1h-1zM14 2h1v1h-1zM16 2h1v1h-1zM17 2h1v1h-1zM23 2h1v1h-1zM0 3h1v1h-1zM3 3h1v1h-1zM4 3h1v1h-1zM5 3h1v1h-1zM6 3h1v1h-1zM7 3h1v1h-1zM11 3h1v1h-1zM12 3h1v1h-1zM14 3h1v1h-1zM15 3h1v1h-1zM18 3h1v1h-1zM19 3h1v1h-1zM0 4h1v1h-1zM3 4h1v1h-1zM11 4h1v1h-1zM12 4h1v1h-1zM13 4h1v1h-1zM17 4h1v1h-1zM19 4h1v1h-1zM21 4h1v1h-1zM6 5h1v1h-1zM7 5h1v1h-1zM10 5h1v1h-1zM15 5h1v1h-1zM20 5h1v1h-1zM0 6h1v1h-1zM3 6h1v1h-1zM6 6h1v1h-1zM7 6h1v1h-1zM8 6h1v1h-1zM13 6h1v1h-1zM14 6h1v1h-1zM17 6h1v1h-1zM18 6h1v1h-1zM20 6h1v1h-1zM21 6h1v1h-1zM0 7h1v1h-1zM1 7h1v1h-1zM2 7h1v1h-1zM4 7h1v1h-1zM6 7h1v1h-1zM7 7h1v1h-1zM8 7h1v1h-1zM11 7h1v1h-1zM13 7h1v1h-1zM14 7h1v1h-1zM17 7h1v1h-1zM22 7h1v1h-1zM0 8h1v1h-1zM5 8h1v1h-1zM6 8h1v1h-1zM7 8h1v1h-1zM10 8h1v1h-1zM19 8h1v1h-1zM20 8h1v1h-1zM21 8h1v1h-1zM2 9h1v1h-1zM3 9h1v1h-1zM4 9h1v1h-1zM8 9h1v1h-1zM11 9h1v1h-1zM15 9h1v1h-1zM16 9h1v1h-1zM17 9h1v1h-1zM22 9h1v1h-1zM1 10h1v1h-1zM2 10h1v1h-1zM3 10h1v1h-1zM4 10h1v1h-1zM5 10h1v1h-1zM6 10h1v1h-1zM7 10h1v1h-1zM11 10h1v1h-1zM13 10h1v1h-1zM18 10h1v1h-1zM19 10h1v1h-1zM20 10h1v1h-1zM21 10h1v1h-1zM0 11h1v1h-1zM1 11h1v1h-1zM4 11h1v1h-1zM6 11h1v1h-1zM9 11h1v1h-1zM11 11h1v1h-1zM13 11h1v1h-1zM15 11h1v1h-1zM19 11h1v1h-1zM22 11h1v1h-1zM2 12h1v1h-1zM10 12h1v1h-1zM15 12h1v1h-1zM16 12h1v1h-1zM17 12h1v1h-1zM21 12h1v1h-1zM6 13h1v1h-1zM8 13h1v1h-1zM12 13h1v1h-1zM14 13h1v1h-1zM15 13h1v1h-1zM18 13h1v1h-1zM19 13h1v1h-1zM20 13h1v1h-1zM22 13h1v1h-1zM1 14h1v1h-1zM3 14h1v1h-1zM5 14h1v1h-1zM8 14h1v1h-1zM15 14h1v1h-1zM16 14h1v1h-1zM23 14h1v1h-1zM4 15h1v1h-1zM6 15h1v1h-1zM8 15h1v1h-1zM12 15h1v1h-1zM13 15h1v1h-1zM14 15h1v1h-1zM20 15h1v1h-1zM1 16h1v1h-1zM3 16h1v1h-1zM4 16h1v1h-1zM7 16h1v1h-1zM8 16h1v1h-1zM13 16h1v1h-1zM14 16h1v1h-1zM18 16h1v1h-1zM20 16h1v1h-1zM21 16h1v1h-1zM22 16h1v1h-1zM2 17h1v1h-1zM6 17h1v1h-1zM11 17h1v1h-1zM14 17h1v1h-1zM15 17h1v1h-1zM17 17h1v1h-1zM18 17h1v1h-1zM0 18h1v1h-1zM5 18h1v1h-1zM7 18h1v1h-1zM10 18h1v1h-1zM14 18h1v1h-1zM17 18h1v1h-1zM18 18h1v1h-1zM19 18h1v1h-1zM21 18h1v1h-1zM22 18h1v1h-1zM4 19h1v1h-1zM8 19h1v1h-1zM17 19h1v1h-1zM19 19h1v1h-1zM20 19h1v1h-1zM22 19h1v1h-1zM2 20h1v1h-1zM5 20h1v1h-1zM6 20h1v1h-1zM9 20h1v1h-1zM14 20h1v1h-1zM15 20h1v1h-1zM16 20h1v1h-1zM17 20h1v1h-1zM18 20h1v1h-1zM20 20h1v1h-1zM21 20h1v1h-1zM23 20h1v1h-1zM2 21h1v1h-1zM3 21h1v1h-1zM4 21h1v1h-1zM7 21h1v1h-1zM10 21h1v1h-1zM11 21h1v1h-1zM15 21h1v1h-1zM17 21h1v1h-1zM20 21h1v1h-1zM21 21h1v1h-1zM23 21h1v1h-1zM3 22h1v1h-1zM8 22h1v1h-1zM11 22h1v1h-1zM16 22h1v1h-1zM18 22h1v1h-1zM20 22h1v1h-1zM21 22h1v1h-1zM22 22h1v1h-1zM23 22h1v1h-1zM6 23h1v1h-1zM10 23h1v1h-1zM12 23h1v1h-1zM14 23h1v1h-1zM16 23h1v1h-1zM18 23h1v1h-1zM19 23h1v1h-1zM20 23h1v1h-1zM21 23h1v1h-1zM22 23h1v1h-1z" fill="#999"/><path d="M0 0h1v1h-1zM3 0h1v1h-1zM7 0h1v1h-1zM9 0h1v1h-1zM12 0h1v1h-1zM9 1h1v1h-1zM16 1h1v1h-1zM23 1h1v1h-1zM4 2h1v1h-1zM8 2h1v1h-1zM10 2h1v1h-1zM18 2h1v1h-1zM20 2h1v1h-1zM21 2h1v1h-1zM2 3h1v1h-1zM13 3h1v1h-1zM16 3h1v1h-1zM17 3h1v1h-1zM21 3h1v1h-1zM8 4h1v1h-1zM14 4h1v1h-1zM20 4h1v1h-1zM11 5h1v1h-1zM17 5h1v1h-1zM19 5h1v1h-1zM1 6h1v1h-1zM2 6h1v1h-1zM4 6h1v1h-1zM5 6h1v1h-1zM9 6h1v1h-1zM10 6h1v1h-1zM12 6h1v1h-1zM16 6h1v1h-1zM19 6h1v1h-1zM22 6h1v1h-1zM21 7h1v1h-1zM12 8h1v1h-1zM14 8h1v1h-1zM16 8h1v1h-1zM18 8h1v1h-1zM7 9h1v1h-1zM9 9h1v1h-1zM12 9h1v1h-1zM20 9h1v1h-1zM21 9h1v1h-1zM10 10h1v1h-1zM15 10h1v1h-1zM3 11h1v1h-1zM18 11h1v1h-1zM21 11h1v1h-1zM8 12h1v1h-1zM12 12h1v1h-1zM13 12h1v1h-1zM14 12h1v1h-1zM18 12h1v1h-1zM19 12h1v1h-1zM20 12h1v1h-1zM23 12h1v1h-1zM0 13h1v1h-1zM1 13h1v1h-1zM4 13h1v1h-1zM21 13h1v1h-1zM4 14h1v1h-1zM6 14h1v1h-1zM18 14h1v1h-1zM19 14h1v1h-1zM20 14h1v1h-1zM0 15h1v1h-1zM1 15h1v1h-1zM2 15h1v1h-1zM5 15h1v1h-1zM11 15h1v1h-1zM15 15h1v1h-1zM17 15h1v1h-1zM18 15h1v1h-1zM19 15h1v1h-1zM15 16h1v1h-1zM23 16h1v1h-1zM0 17h1v1h-1zM5 17h1v1h-1zM8 17h1v1h-1zM9 17h1v1h-1zM19 17h1v1h-1zM20 17h1v1h-1zM4 18h1v1h-1zM6 18h1v1h-1zM8 18h1v1h-1zM5 19h1v1h-1zM11 19h1v1h-1zM18 19h1v1h-1zM1 20h1v1h-1zM13 20h1v1h-1zM0 21h1v1h-1zM5 21h1v1h-1zM8 21h1v1h-1zM9 21h1v1h-1zM12 21h1v1h-1zM14 21h1v1h-1zM22 21h1v1h-1zM2 22h1v1h-1zM9 22h1v1h-1zM10 22h1v1h-1zM3 23h1v1h-1zM8 23h1v1h-1zM23 23h1v1h-1z" fill="#aaa"/><path d="M1 0h1v1h-1zM6 0h1v1h-1zM10 0h1v1h-1zM1 3h1v1h-1zM8 3h1v1h-1zM20 3h1v1h-1zM15 6h1v1h-1zM16 7h1v1h-1zM18 7h1v1h-1zM1 9h1v1h-1zM5 9h1v1h-1zM13 9h1v1h-1zM14 9h1v1h-1zM23 9h1v1h-1zM8 10h1v1h-1zM0 12h1v1h-1zM3 12h1v1h-1zM4 12h1v1h-1zM5 12h1v1h-1zM22 12h1v1h-1zM3 15h1v1h-1zM9 15h1v1h-1zM21 15h1v1h-1zM22 15h1v1h-1zM3 17h1v1h-1zM1 18h1v1h-1zM2 18h1v1h-1zM3 18h1v1h-1zM11 18h1v1h-1zM15 18h1v1h-1zM16 18h1v1h-1z" fill="#bbb"/><path d="M23 3h1v1h-1zM23 15h1v1h-1z" fill="#ccc"/></svg>
<svg class="a" style="left:272.9px;top:182.3px" width="24" height="24" viewBox="0 0 24 24" shape-rendering="crispEdges"><path d="M1 18h1v1h-1zM11 22h1v1h-1z" fill="#777"/><path d="M1 0h1v1h-1zM2 0h1v1h-1zM3 2h1v1h-1zM9 2h1v1h-1zM12 2h1v1h-1zM13 2h1v1h-1zM3 3h1v1h-1zM19 3h1v1h-1zM21 3h1v1h-1zM3 4h1v1h-1zM7 4h1v1h-1zM14 4h1v1h-1zM20 4h1v1h-1zM21 4h1v1h-1zM22 5h1v1h-1zM0 6h1v1h-1zM1 6h1v1h-1zM16 6h1v1h-1zM19 6h1v1h-1zM1 7h1v1h-1zM4 7h1v1h-1zM15 7h1v1h-1zM3 8h1v1h-1zM4 8h1v1h-1zM5 8h1v1h-1zM22 8h1v1h-1zM15 9h1v1h-1zM22 9h1v1h-1zM0 10h1v1h-1zM5 10h1v1h-1zM17 10h1v1h-1zM13 11h1v1h-1zM19 11h1v1h-1zM20 11h1v1h-1zM2 12h1v1h-1zM3 12h1v1h-1zM6 12h1v1h-1zM7 12h1v1h-1zM9 12h1v1h-1zM14 12h1v1h-1zM15 12h1v1h-1zM2 13h1v1h-1zM5 13h1v1h-1zM8 13h1v1h-1zM13 13h1v1h-1zM19 13h1v1h-1zM0 14h1v1h-1zM16 14h1v1h-1zM19 14h1v1h-1zM13 15h1v1h-1zM2 16h1v1h-1zM8 16h1v1h-1zM13 16h1v1h-1zM16 16h1v1h-1zM18 16h1v1h-1zM1 17h1v1h-1zM2 17h1v1h-1zM4 17h1v1h-1zM8 17h1v1h-1zM9 17h1v1h-1zM3 18h1v1h-1zM19 18h1v1h-1zM0 19h1v1h-1zM6 19h1v1h-1zM8 19h1v1h-1zM12 19h1v1h-1zM17 19h1v1h-1zM20 19h1v1h-1zM0 20h1v1h-1zM2 20h1v1h-1zM10 20h1v1h-1zM11 20h1v1h-1zM22 20h1v1h-1zM0 21h1v1h-1zM3 21h1v1h-1zM10 21h1v1h-1zM15 21h1v1h-1zM0 22h1v1h-1zM3 22h1v1h-1zM17 22h1v1h-1zM20 22h1v1h-1zM4 23h1v1h-1zM8 23h1v1h-1zM23 23h1v1h-1z" fill="#888"/><path d="M0 0h1v1h-1zM3 0h1v1h-1zM4 0h1v1h-1zM6 0h1v1h-1zM7 0h1v1h-1zM10 0h1v1h-1zM11 0h1v1h-1zM12 0h1v1h-1zM14 0h1v1h-1zM15 0h1v1h-1zM16 0h1v1h-1zM17 0h1v1h-1zM18 0h1v1h-1zM19 0h1v1h-1zM20 0h1v1h-1zM21 0h1v1h-1zM22 0h1v1h-1zM23 0h1v1h-1zM0 1h1v1h-1zM1 1h1v1h-1zM2 1h1v1h-1zM3 1h1v1h-1zM4 1h1v1h-1zM6 1h1v1h-1zM7 1h1v1h-1zM8 1h1v1h-1zM9 1h1v1h-1zM10 1h1v1h-1zM11 1h1v1h-1zM12 1h1v1h-1zM13 1h1v1h-1zM15 1h1v1h-1zM16 1h1v1h-1zM17 1h1v1h-1zM18 1h1v1h-1zM19 1h1v1h-1zM20 1h1v1h-1zM21 1h1v1h-1zM22 1h1v1h-1zM23 1h1v1h-1zM0 2h1v1h-1zM1 2h1v1h-1zM2 2h1v1h-1zM4 2h1v1h-1zM5 2h1v1h-1zM6 2h1v1h-1zM7 2h1v1h-1zM8 2h1v1h-1zM10 2h1v1h-1zM11 2h1v1h-1zM14 2h1v1h-1zM15 2h1v1h-1zM16 2h1v1h-1zM17 2h1v1h-1zM18 2h1v1h-1zM19 2h1v1h-1zM21 2h1v1h-1zM22 2h1v1h-1zM23 2h1v1h-1zM1 3h1v1h-1zM2 3h1v1h-1zM4 3h1v1h-1zM5 3h1v1h-1zM6 3h1v1h-1zM8 3h1v1h-1zM9 3h1v1h-1zM10 3h1v1h-1zM12 3h1v1h-1zM13 3h1v1h-1zM14 3h1v1h-1zM16 3h1v1h-1zM17 3h1v1h-1zM18 3h1v1h-1zM20 3h1v1h-1zM23 3h1v1h-1zM0 4h1v1h-1zM1 4h1v1h-1zM2 4h1v1h-1zM4 4h1v1h-1zM5 4h1v1h-1zM6 4h1v1h-1zM8 4h1v1h-1zM9 4h1v1h-1zM10 4h1v1h-1zM11 4h1v1h-1zM12 4h1v1h-1zM13 4h1v1h-1zM15 4h1v1h-1zM16 4h1v1h-1zM17 4h1v1h-1zM18 4h1v1h-1zM22 4h1v1h-1zM23 4h1v1h-1zM1 5h1v1h-1zM2 5h1v1h-1zM3 5h1v1h-1zM5 5h1v1h-1zM6 5h1v1h-1zM7 5h1v1h-1zM8 5h1v1h-1zM9 5h1v1h-1zM11 5h1v1h-1zM12 5h1v1h-1zM13 5h1v1h-1zM14 5h1v1h-1zM16 5h1v1h-1zM17 5h1v1h-1zM18 5h1v1h-1zM20 5h1v1h-1zM2 6h1v1h-1zM3 6h1v1h-1zM4 6h1v1h-1zM5 6h1v1h-1zM6 6h1v1h-1zM7 6h1v1h-1zM9 6h1v1h-1zM10 6h1v1h-1zM13 6h1v1h-1zM14 6h1v1h-1zM17 6h1v1h-1zM18 6h1v1h-1zM20 6h1v1h-1zM22 6h1v1h-1zM23 6h1v1h-1zM0 7h1v1h-1zM2 7h1v1h-1zM3 7h1v1h-1zM5 7h1v1h-1zM6 7h1v1h-1zM7 7h1v1h-1zM8 7h1v1h-1zM11 7h1v1h-1zM12 7h1v1h-1zM13 7h1v1h-1zM14 7h1v1h-1zM16 7h1v1h-1zM19 7h1v1h-1zM20 7h1v1h-1zM21 7h1v1h-1zM22 7h1v1h-1zM23 7h1v1h-1zM1 8h1v1h-1zM6 8h1v1h-1zM7 8h1v1h-1zM9 8h1v1h-1zM11 8h1v1h-1zM12 8h1v1h-1zM13 8h1v1h-1zM15 8h1v1h-1zM16 8h1v1h-1zM18 8h1v1h-1zM19 8h1v1h-1zM20 8h1v1h-1zM21 8h1v1h-1zM23 8h1v1h-1zM1 9h1v1h-1zM2 9h1v1h-1zM4 9h1v1h-1zM6 9h1v1h-1zM7 9h1v1h-1zM8 9h1v1h-1zM9 9h1v1h-1zM10 9h1v1h-1zM11 9h1v1h-1zM14 9h1v1h-1zM17 9h1v1h-1zM18 9h1v1h-1zM19 9h1v1h-1zM20 9h1v1h-1zM23 9h1v1h-1zM2 10h1v1h-1zM6 10h1v1h-1zM7 10h1v1h-1zM8 10h1v1h-1zM9 10h1v1h-1zM12 10h1v1h-1zM13 10h1v1h-1zM14 10h1v1h-1zM15 10h1v1h-1zM16 10h1v1h-1zM19 10h1v1h-1zM20 10h1v1h-1zM21 10h1v1h-1zM22 10h1v1h-1zM23 10h1v1h-1zM0 11h1v1h-1zM1 11h1v1h-1zM3 11h1v1h-1zM4 11h1v1h-1zM5 11h1v1h-1zM6 11h1v1h-1zM8 11h1v1h-1zM9 11h1v1h-1zM11 11h1v1h-1zM12 11h1v1h-1zM15 11h1v1h-1zM16 11h1v1h-1zM17 11h1v1h-1zM18 11h1v1h-1zM21 11h1v1h-1zM22 11h1v1h-1zM23 11h1v1h-1zM0 12h1v1h-1zM1 12h1v1h-1zM5 12h1v1h-1zM8 12h1v1h-1zM10 12h1v1h-1zM11 12h1v1h-1zM12 12h1v1h-1zM13 12h1v1h-1zM16 12h1v1h-1zM17 12h1v1h-1zM18 12h1v1h-1zM20 12h1v1h-1zM21 12h1v1h-1zM22 12h1v1h-1zM23 12h1v1h-1zM0 13h1v1h-1zM6 13h1v1h-1zM7 13h1v1h-1zM9 13h1v1h-1zM10 13h1v1h-1zM11 13h1v1h-1zM12 13h1v1h-1zM16 13h1v1h-1zM20 13h1v1h-1zM21 13h1v1h-1zM22 13h1v1h-1zM23 13h1v1h-1zM2 14h1v1h-1zM3 14h1v1h-1zM5 14h1v1h-1zM6 14h1v1h-1zM8 14h1v1h-1zM9 14h1v1h-1zM10 14h1v1h-1zM12 14h1v1h-1zM13 14h1v1h-1zM14 14h1v1h-1zM15 14h1v1h-1zM17 14h1v1h-1zM18 14h1v1h-1zM20 14h1v1h-1zM21 14h1v1h-1zM22 14h1v1h-1zM0 15h1v1h-1zM1 15h1v1h-1zM2 15h1v1h-1zM3 15h1v1h-1zM4 15h1v1h-1zM5 15h1v1h-1zM6 15h1v1h-1zM12 15h1v1h-1zM14 15h1v1h-1zM15 15h1v1h-1zM16 15h1v1h-1zM17 15h1v1h-1zM18 15h1v1h-1zM20 15h1v1h-1zM21 15h1v1h-1zM23 15h1v1h-1zM0 16h1v1h-1zM1 16h1v1h-1zM4 16h1v1h-1zM5 16h1v1h-1zM6 16h1v1h-1zM7 16h1v1h-1zM10 16h1v1h-1zM11 16h1v1h-1zM14 16h1v1h-1zM15 16h1v1h-1zM19 16h1v1h-1zM20 16h1v1h-1zM21 16h1v1h-1zM22 16h1v1h-1zM0 17h1v1h-1zM3 17h1v1h-1zM5 17h1v1h-1zM6 17h1v1h-1zM7 17h1v1h-1zM10 17h1v1h-1zM11 17h1v1h-1zM13 17h1v1h-1zM14 17h1v1h-1zM15 17h1v1h-1zM16 17h1v1h-1zM17 17h1v1h-1zM19 17h1v1h-1zM20 17h1v1h-1zM21 17h1v1h-1zM23 17h1v1h-1zM2 18h1v1h-1zM4 18h1v1h-1zM5 18h1v1h-1zM6 18h1v1h-1zM7 18h1v1h-1zM8 18h1v1h-1zM10 18h1v1h-1zM12 18h1v1h-1zM13 18h1v1h-1zM14 18h1v1h-1zM17 18h1v1h-1zM20 18h1v1h-1zM22 18h1v1h-1zM23 18h1v1h-1zM1 19h1v1h-1zM2 19h1v1h-1zM4 19h1v1h-1zM7 19h1v1h-1zM9 19h1v1h-1zM11 19h1v1h-1zM13 19h1v1h-1zM15 19h1v1h-1zM19 19h1v1h-1zM22 19h1v1h-1zM23 19h1v1h-1zM1 20h1v1h-1zM4 20h1v1h-1zM5 20h1v1h-1zM6 20h1v1h-1zM8 20h1v1h-1zM9 20h1v1h-1zM12 20h1v1h-1zM13 20h1v1h-1zM14 20h1v1h-1zM16 20h1v1h-1zM17 20h1v1h-1zM18 20h1v1h-1zM19 20h1v1h-1zM20 20h1v1h-1zM21 20h1v1h-1zM23 20h1v1h-1zM1 21h1v1h-1zM5 21h1v1h-1zM6 21h1v1h-1zM7 21h1v1h-1zM8 21h1v1h-1zM9 21h1v1h-1zM11 21h1v1h-1zM12 21h1v1h-1zM13 21h1v1h-1zM14 21h1v1h-1zM16 21h1v1h-1zM17 21h1v1h-1zM18 21h1v1h-1zM19 21h1v1h-1zM20 21h1v1h-1zM21 21h1v1h-1zM22 21h1v1h-1zM1 22h1v1h-1zM2 22h1v1h-1zM4 22h1v1h-1zM5 22h1v1h-1zM7 22h1v1h-1zM9 22h1v1h-1zM10 22h1v1h-1zM12 22h1v1h-1zM13 22h1v1h-1zM14 22h1v1h-1zM15 22h1v1h-1zM18 22h1v1h-1zM21 22h1v1h-1zM22 22h1v1h-1zM1 23h1v1h-1zM3 23h1v1h-1zM5 23h1v1h-1zM6 23h1v1h-1zM7 23h1v1h-1zM9 23h1v1h-1zM10 23h1v1h-1zM11 23h1v1h-1zM13 23h1v1h-1zM14 23h1v1h-1zM15 23h1v1h-1zM16 23h1v1h-1zM18 23h1v1h-1zM20 23h1v1h-1zM21 23h1v1h-1zM22 23h1v1h-1z" fill="#999"/><path d="M5 0h1v1h-1zM8 0h1v1h-1zM9 0h1v1h-1zM13 0h1v1h-1zM5 1h1v1h-1zM14 1h1v1h-1zM20 2h1v1h-1zM0 3h1v1h-1zM7 3h1v1h-1zM11 3h1v1h-1zM15 3h1v1h-1zM22 3h1v1h-1zM19 4h1v1h-1zM0 5h1v1h-1zM4 5h1v1h-1zM10 5h1v1h-1zM15 5h1v1h-1zM19 5h1v1h-1zM21 5h1v1h-1zM23 5h1v1h-1zM8 6h1v1h-1zM11 6h1v1h-1zM12 6h1v1h-1zM15 6h1v1h-1zM21 6h1v1h-1zM9 7h1v1h-1zM10 7h1v1h-1zM17 7h1v1h-1zM18 7h1v1h-1zM0 8h1v1h-1zM2 8h1v1h-1zM8 8h1v1h-1zM10 8h1v1h-1zM14 8h1v1h-1zM17 8h1v1h-1zM0 9h1v1h-1zM3 9h1v1h-1zM5 9h1v1h-1zM12 9h1v1h-1zM13 9h1v1h-1zM16 9h1v1h-1zM21 9h1v1h-1zM1 10h1v1h-1zM3 10h1v1h-1zM4 10h1v1h-1zM10 10h1v1h-1zM11 10h1v1h-1zM18 10h1v1h-1zM2 11h1v1h-1zM7 11h1v1h-1zM10 11h1v1h-1zM14 11h1v1h-1zM4 12h1v1h-1zM19 12h1v1h-1zM1 13h1v1h-1zM3 13h1v1h-1zM4 13h1v1h-1zM14 13h1v1h-1zM15 13h1v1h-1zM17 13h1v1h-1zM18 13h1v1h-1zM1 14h1v1h-1zM4 14h1v1h-1zM7 14h1v1h-1zM23 14h1v1h-1zM7 15h1v1h-1zM8 15h1v1h-1zM9 15h1v1h-1zM10 15h1v1h-1zM19 15h1v1h-1zM22 15h1v1h-1zM3 16h1v1h-1zM9 16h1v1h-1zM17 16h1v1h-1zM23 16h1v1h-1zM12 17h1v1h-1zM18 17h1v1h-1zM22 17h1v1h-1zM0 18h1v1h-1zM9 18h1v1h-1zM11 18h1v1h-1zM15 18h1v1h-1zM16 18h1v1h-1zM18 18h1v1h-1zM21 18h1v1h-1zM3 19h1v1h-1zM5 19h1v1h-1zM10 19h1v1h-1zM14 19h1v1h-1zM16 19h1v1h-1zM18 19h1v1h-1zM21 19h1v1h-1zM3 20h1v1h-1zM7 20h1v1h-1zM15 20h1v1h-1zM2 21h1v1h-1zM4 21h1v1h-1zM23 21h1v1h-1zM6 22h1v1h-1zM8 22h1v1h-1zM16 22h1v1h-1zM19 22h1v1h-1zM23 22h1v1h-1zM0 23h1v1h-1zM2 23h1v1h-1zM12 23h1v1h-1zM17 23h1v1h-1zM19 23h1v1h-1z" fill="#aaa"/><path d="M11 14h1v1h-1zM11 15h1v1h-1zM12 16h1v1h-1z" fill="#bbb"/></svg>
<div class="a" style="left:300.5px;top:181px;width:26px;height:26px;background:#e9e9e9"></div>

<div class="a" style="left:327.55px;top:187px;width:27.37px;height:6px;background:#fff"></div>
<div class="a" style="left:329.4px;top:192.8px;width:24px;height:7.3px;background:#000"></div>
<div class="a" style="left:199.1px;top:212px;width:0.7px;height:22.5px;background:#8a8a8a"></div>
<div class="a" style="left:198.8px;top:211px;width:1.4px;height:2px;background:#333"></div>
<div class="a" style="left:214.07px;top:213.5px;width:27.37px;height:8.5px;background:#fff"></div>
<div class="a" style="left:215.97px;top:222px;width:24px;height:7.6px;background:#000"></div>
<div class="a" style="left:215.97px;top:225.5px;width:24px;height:0.6px;background:#2a2a2a"></div>
<div class="a" style="left:227.47px;top:222px;width:0.6px;height:7.6px;background:#2a2a2a"></div>
<div class="a" style="left:242.44px;top:213.5px;width:27.37px;height:8.5px;background:#fff"></div>
<div class="a" style="left:244.34px;top:222px;width:24px;height:7.6px;background:#000"></div>
<div class="a" style="left:244.34px;top:225.5px;width:24px;height:0.6px;background:#2a2a2a"></div>
<div class="a" style="left:255.84px;top:222px;width:0.6px;height:7.6px;background:#2a2a2a"></div>
<div class="a" style="left:270.81px;top:213.5px;width:27.37px;height:8.5px;background:#fff"></div>
<div class="a" style="left:272.71px;top:222px;width:24px;height:7.6px;background:#000"></div>
<div class="a" style="left:272.71px;top:222px;width:24px;height:7.6px;background:linear-gradient(180deg,transparent 3.4px,#1c1c1c 3.4px,#1c1c1c 4.2px,transparent 4.2px),repeating-linear-gradient(90deg,transparent 0,transparent 2.6px,#1e1e1e 2.6px,#1e1e1e 3.4px,transparent 3.4px,transparent 4px)"></div>
<div class="a" style="left:269.81px;top:207.87px;width:29.37px;height:29.37px;border:1px solid #5f92e2"></div>
<svg class="a" style="left:377px;top:179px" width="12" height="12" viewBox="0 0 12 12"><g transform="translate(5.6 5.8)" stroke="#111" stroke-width="1.6" stroke-linecap="round"><line x1="2.20" y1="0.00" x2="4.10" y2="0.00"/><line x1="1.56" y1="1.56" x2="2.90" y2="2.90"/><line x1="0.00" y1="2.20" x2="0.00" y2="4.10"/><line x1="-1.56" y1="1.56" x2="-2.90" y2="2.90"/><line x1="-2.20" y1="0.00" x2="-4.10" y2="0.00"/><line x1="-1.56" y1="-1.56" x2="-2.90" y2="-2.90"/><line x1="-0.00" y1="-2.20" x2="-0.00" y2="-4.10"/><line x1="1.56" y1="-1.56" x2="2.90" y2="-2.90"/><circle r="2.4" fill="none" stroke-width="1.5"/></g></svg>
<svg class="a" style="left:389px;top:186.5px" width="3" height="2" viewBox="0 0 3 2"><path d="M0 0H3L1.5 2Z" fill="#222"/></svg>
<div class="a" style="left:397.0px;top:295.7px;width:1.2px;height:1.2px;background:#8a8a8a"></div>
<div class="a" style="left:394.4px;top:298.4px;width:1.2px;height:1.2px;background:#8a8a8a"></div>
<div class="a" style="left:397.0px;top:298.4px;width:1.2px;height:1.2px;background:#8a8a8a"></div>
<div class="a" style="left:391.6px;top:301.2px;width:1.2px;height:1.2px;background:#8a8a8a"></div>
<div class="a" style="left:394.4px;top:301.2px;width:1.2px;height:1.2px;background:#8a8a8a"></div>
<div class="a" style="left:397.0px;top:301.2px;width:1.2px;height:1.2px;background:#8a8a8a"></div>
<div class="a" style="left:402px;top:213px;width:4.5px;height:15.5px;background:#e4e4e4;border:1px solid #b4b4b4;border-left:none"></div>


<div class="t" id="ttl" style="left:23.20px;top:13.90px;font-size:11.6px;line-height:13.34px;-webkit-text-stroke:0;color:#101010;transform:scaleX(0.8397)">Layer Style</div>
<div class="t" id="styles" style="left:34.60px;top:48.51px;font-size:9.6px;line-height:11.04px;color:#101010;transform:scaleX(0.8701)">Styles</div>
<div class="t" id="blend" style="left:36.20px;top:70.80px;font-size:9.5px;line-height:10.92px;color:#101010;transform:scaleX(0.9285)">Blending Options: Default</div>
<div class="t" id="pov" style="left:193.00px;top:42.87px;font-size:9.2px;line-height:10.58px;font-weight:bold;color:#080808;transform:scaleX(1.0131)">Pattern Overlay</div>
<div class="t" id="pat" style="left:202.20px;top:54.67px;font-size:9.2px;line-height:10.58px;font-weight:bold;color:#080808;transform:scaleX(1.0159)">Pattern</div>
<div class="t" id="bm" style="left:201.20px;top:73.86px;font-size:9.0px;line-height:10.35px;color:#101010;transform:scaleX(0.9800)">Blend Mode:</div>
<div class="t" id="normal" style="left:258.00px;top:75.06px;font-size:9.0px;line-height:10.35px;color:#101010;transform:scaleX(0.9422)">Normal</div>
<div class="t" id="opac" style="left:216.00px;top:95.86px;font-size:9.0px;line-height:10.35px;color:#101010;transform:scaleX(1.0275)">Opacity:</div>
<div class="t" id="100" style="left:358.80px;top:96.14px;font-size:8.8px;line-height:10.12px;color:#101010;transform:scaleX(0.8549)">100</div>
<div class="t" id="pct" style="left:391.40px;top:96.25px;font-size:9.0px;line-height:10.35px;color:#101010;transform:scaleX(0.9572)">%</div>
<div class="t" id="patl" style="left:219.00px;top:135.05px;font-size:9.0px;line-height:10.35px;color:#101010;transform:scaleX(0.9876)">Pattern:</div>
<div class="t" id="snap" style="left:364.60px;top:136.46px;font-size:9.0px;line-height:10.35px;color:#101010;transform:scaleX(1.0087)">Snap to Origin</div>
<div class="t" id="ok" style="left:519.80px;top:46.37px;font-size:11.3px;line-height:12.99px;color:#080808;transform:scaleX(0.7846)">OK</div>
<div class="t" id="cancel" style="left:511.20px;top:71.37px;font-size:11.3px;line-height:12.99px;color:#080808;transform:scaleX(0.8620)">Cancel</div>
<div class="t" id="newst" style="left:496.60px;top:96.17px;font-size:11.3px;line-height:12.99px;color:#080808;transform:scaleX(0.9833)">New Style...</div>
<div class="t" id="preview" style="left:512.00px;top:116.59px;font-size:11.5px;line-height:13.22px;color:#080808;transform:scaleX(0.8807)">Preview</div>
<div class="t" id="li0" style="left:49.48px;top:90.05px;font-size:9.0px;line-height:10.35px;color:#101010;transform:scaleX(0.9289)">Bevel &amp; Emboss</div>
<div class="t" id="li1" style="left:60.38px;top:110.01px;font-size:9.0px;line-height:10.35px;color:#101010;transform:scaleX(0.9071)">Contour</div>
<div class="t" id="li2" style="left:61.34px;top:128.97px;font-size:9.0px;line-height:10.35px;color:#101010;transform:scaleX(0.9643)">Texture</div>
<div class="t" id="li3" style="left:48.52px;top:148.93px;font-size:9.0px;line-height:10.35px;color:#101010;transform:scaleX(0.9424)">Stroke</div>
<div class="t" id="li4" style="left:48.52px;top:167.89px;font-size:9.0px;line-height:10.35px;color:#101010;transform:scaleX(0.9968)">Inner Shadow</div>
<div class="t" id="li5" style="left:48.52px;top:187.85px;font-size:9.0px;line-height:10.35px;color:#101010;transform:scaleX(0.9908)">Inner Glow</div>
<div class="t" id="li6" style="left:48.52px;top:206.81px;font-size:9.0px;line-height:10.35px;color:#101010;transform:scaleX(0.8836)">Satin</div>
<div class="t" id="li7" style="left:48.52px;top:226.77px;font-size:9.0px;line-height:10.35px;color:#101010;transform:scaleX(0.9249)">Color Overlay</div>
<div class="t" id="li8" style="left:48.52px;top:245.73px;font-size:9.0px;line-height:10.35px;color:#101010;transform:scaleX(0.9472)">Gradient Overlay</div>
<div class="t" id="li9" style="left:48.52px;top:265.69px;font-size:9.0px;line-height:10.35px;color:#101010;transform:scaleX(0.9405)">Pattern Overlay</div>
<div class="t" id="li10" style="left:48.76px;top:285.65px;font-size:9.0px;line-height:10.35px;color:#101010;transform:scaleX(0.9458)">Outer Glow</div>
<div class="t" id="li11" style="left:49.50px;top:304.62px;font-size:9.0px;line-height:10.35px;color:#101010;transform:scaleX(0.9501)">Drop Shadow</div>
</body></html>
